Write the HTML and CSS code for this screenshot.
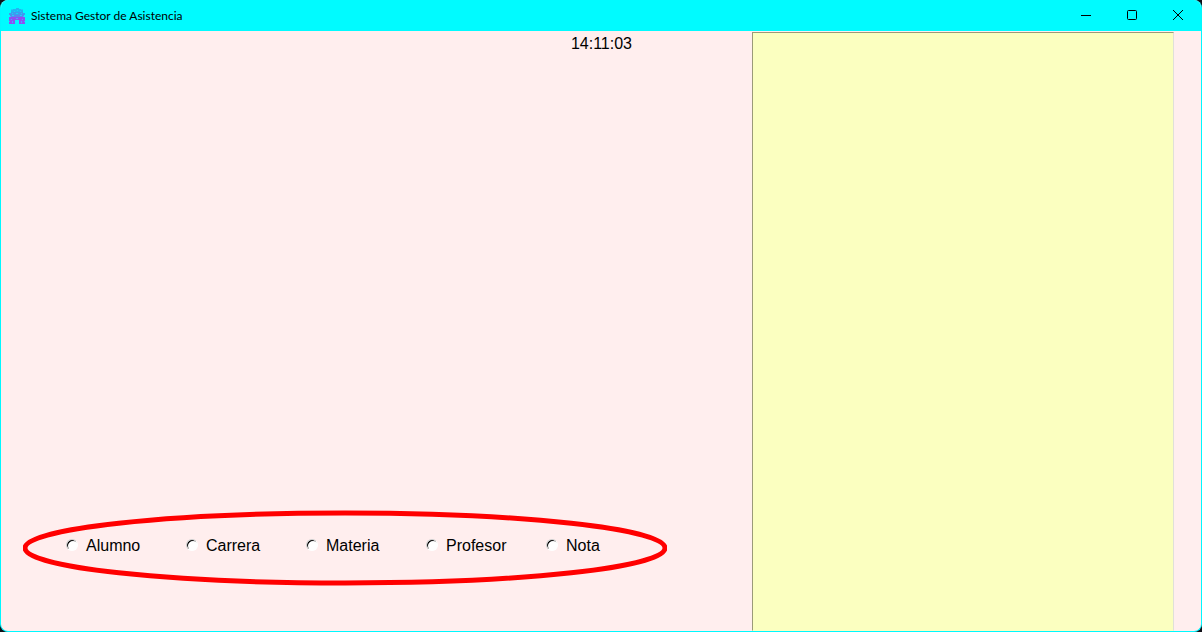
FILE: index.html
```html
<!DOCTYPE html>
<html lang="es">
<head>
<meta charset="utf-8">
<title>Sistema Gestor de Asistencia</title>
<link rel="stylesheet" href="styles.css">
</head>
<body>
<div class="window">
  <header class="titlebar">
    <svg class="app-icon" viewBox="0 0 16 16" shape-rendering="crispEdges" aria-hidden="true">
      <path fill="#22b4f4" d="M7 0h3v1h4v3H2V1h5z"/>
      <path fill="#3c9cf0" d="M2 4h12v1h2v2H0V5h2z"/>
      <path fill="#14d4fa" d="M5 3h1v1H5zM8 2h1v1H8zM11 3h1v1h-1zM3 5h1v1H3zM7 5h2v1H7zM12 5h1v1h-1zM2 1h2v1H2zM12 1h2v1h-2z"/>
      <path fill="#5a84f0" d="M1 7h14v2H1z"/>
      <path fill="#20d0fc" d="M3 7h2v1H3zM11 7h2v1h-2zM1 8h1v1H1zM14 8h1v1h-1z"/>
      <path fill="#8c50f4" d="M0 9h16v7h-6v-4H6v4H0z"/>
      <path fill="#48a8fc" d="M2 11h1v1H2zM13 11h1v1h-1zM0 13h1v1H0zM3 13h1v2H3zM12 13h1v2h-1zM15 13h1v1h-1zM7 10h2v1H7z"/>
    </svg>
    <h1 class="title">Sistema Gestor de Asistencia</h1>
    <div class="controls">
      <button class="control" type="button" aria-label="Minimizar">
        <svg class="glyph" viewBox="0 0 12 12" aria-hidden="true"><path d="M1 5.5h10"/></svg>
      </button>
      <button class="control" type="button" aria-label="Maximizar">
        <svg class="glyph" viewBox="0 0 12 12" aria-hidden="true"><rect x="1.5" y="0.5" width="9" height="9" rx="1"/></svg>
      </button>
      <button class="control" type="button" aria-label="Cerrar">
        <svg class="glyph" viewBox="0 0 12 12" aria-hidden="true"><path d="M1 0l10 10M11 0L1 10"/></svg>
      </button>
    </div>
  </header>
  <div class="content">
    <main class="main">
      <time class="clock">14:11:03</time>
      <form class="options">
        <svg class="outline" viewBox="0 0 644 76" preserveAspectRatio="none" aria-hidden="true"><ellipse cx="322" cy="38" rx="320" ry="35"/></svg>
        <label class="option"><input class="radio" type="radio" name="tipo" value="alumno">Alumno</label>
        <label class="option"><input class="radio" type="radio" name="tipo" value="carrera">Carrera</label>
        <label class="option"><input class="radio" type="radio" name="tipo" value="materia">Materia</label>
        <label class="option"><input class="radio" type="radio" name="tipo" value="profesor">Profesor</label>
        <label class="option"><input class="radio" type="radio" name="tipo" value="nota">Nota</label>
      </form>
    </main>
    <aside class="panel"></aside>
  </div>
</div>
</body>
</html>
```

FILE: styles.css
```css
* {
  box-sizing: border-box;
}

body {
  margin: 0;
  background: #101018;
  color: #000;
  font-family: "Liberation Sans", Arial, sans-serif;
  font-size: 16px;
  line-height: 18px;
}

.window {
  display: flex;
  flex-direction: column;
  min-height: 100vh;
  overflow: hidden;
  border: 1px solid #00f8ff;
  border-top: 0;
  border-radius: 8px;
  background: #ffeeee;
}

.titlebar {
  display: flex;
  align-items: center;
  height: 31px;
  padding-left: 8px;
  background: #00fbff;
}

.app-icon {
  width: 16px;
  height: 16px;
}

.title {
  margin: 0 0 0 6px;
  font: 400 12px/16px "Segoe UI", Lato, sans-serif;
}

.controls {
  display: flex;
  align-self: stretch;
  margin-left: auto;
}

.control {
  display: flex;
  align-items: center;
  justify-content: center;
  width: 46px;
  padding: 0;
  border: 0;
  background: transparent;
}

.glyph {
  width: 12px;
  height: 12px;
  fill: none;
  stroke: #000;
}

.content {
  display: flex;
  flex: 1;
  padding: 1px 27px 0 0;
}

.main {
  display: flex;
  flex: 1;
  flex-direction: column;
}

.clock {
  align-self: flex-end;
  padding: 3px 120px 0 0;
}

.options {
  display: flex;
  position: relative;
  align-self: flex-start;
  width: 644px;
  height: 76px;
  margin: auto 0 45px 22px;
  padding: 26px 0 0 43px;
}

.outline {
  position: absolute;
  inset: 0;
  width: 100%;
  height: 100%;
  fill: none;
  stroke: #ff0000;
  stroke-width: 5px;
  pointer-events: none;
}

.option {
  display: flex;
  gap: 8px;
  align-items: center;
  width: 120px;
  height: 20px;
}

.radio {
  appearance: none;
  width: 12px;
  height: 12px;
  margin: 0 0 2px;
  border: 1px solid;
  border-color: #ccc #fff #fff #ccc;
  border-radius: 50%;
  background: #fff;
  box-shadow: inset 1px 1px 0 #000;
}

.radio:checked {
  background: radial-gradient(circle, #000 2px, #fff 3px);
}

.panel {
  width: 422px;
  border: 1px solid;
  border-color: #9a9a78 #e0e0d8 #fbffc0 #9a9a78;
  background: #fbffc0;
}
```
